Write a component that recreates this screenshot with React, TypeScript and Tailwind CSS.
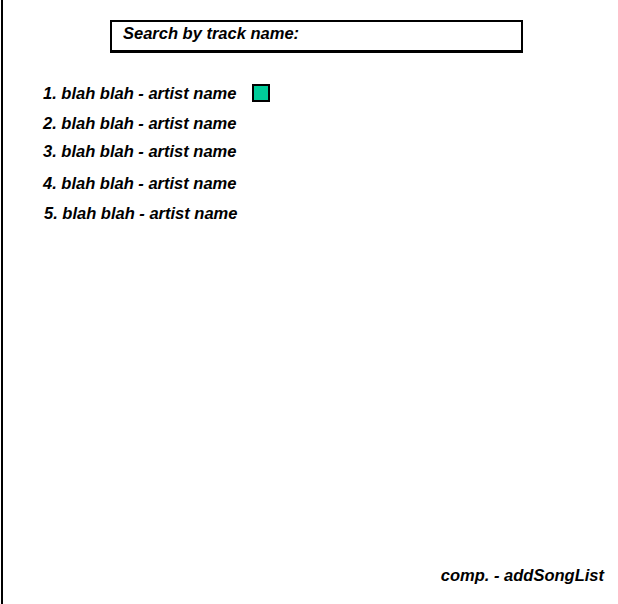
const tracks = [
  { label: "1. blah blah - artist name", gap: "mt-[31px]", selected: true },
  { label: "2. blah blah - artist name", gap: "mt-[13px]" },
  { label: "3. blah blah - artist name", gap: "mt-[12px]" },
  { label: "4. blah blah - artist name", gap: "mt-[16px]" },
  { label: "5. blah blah - artist name", gap: "mt-[14px]", nudge: true },
];

export default function App() {
  return (
    <main
      className="ml-px flex h-[604px] w-[617px] flex-col border-l-2 border-black bg-white text-[16.5px] font-bold italic leading-[16px] text-black"
      style={{ fontFamily: '"Liberation Sans", Arial, sans-serif' }}
    >
      <div className="ml-[107px] mt-[20px] h-[33px] w-[413px] border-2 border-b-[3px] border-black pl-[11px] pt-[3px]">
        <p>Search by track name:</p>
      </div>

      <ul className="flex flex-col pl-[40px]">
        {tracks.map((track) =>
          track.selected ? (
            <li key={track.label} className={`${track.gap} flex h-[18px] items-center`}>
              <span>{track.label}</span>
              <span className="ml-[16px] h-[18px] w-[18px] border-2 border-black bg-[#00cc99]" />
            </li>
          ) : (
            <li key={track.label} className={`${track.gap} ${track.nudge ? "pl-px" : ""}`}>
              {track.label}
            </li>
          ),
        )}
      </ul>

      <p className="mt-auto self-end pb-[21px] pr-[14px]">comp. - addSongList</p>
    </main>
  );
}
